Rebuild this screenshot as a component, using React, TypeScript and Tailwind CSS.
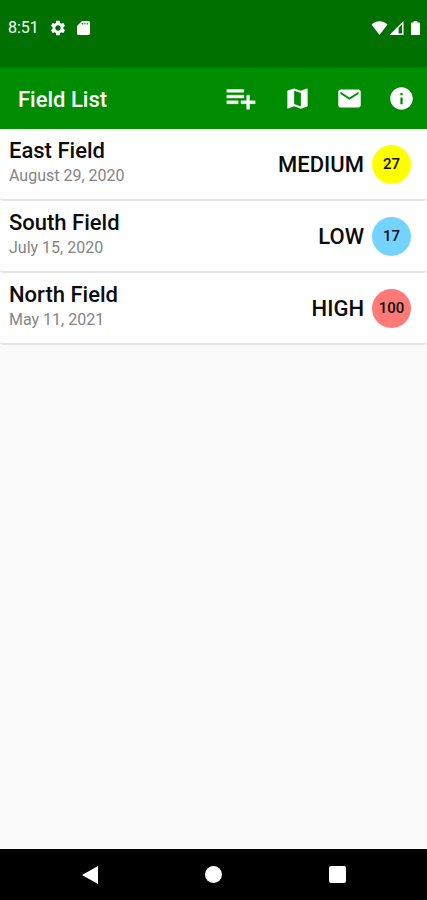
import type { ReactNode } from "react";
import { MdEmail, MdInfo, MdSettings } from "react-icons/md";

type Field = {
  name: string;
  date: string;
  risk: string;
  score: number;
  badge: string;
};

const fields: Field[] = [
  { name: "East Field", date: "August 29, 2020", risk: "MEDIUM", score: 27, badge: "bg-[#ffff00]" },
  { name: "South Field", date: "July 15, 2020", risk: "LOW", score: 17, badge: "bg-[#74d4ff]" },
  { name: "North Field", date: "May 11, 2021", risk: "HIGH", score: 100, badge: "bg-[#ff7a77]" },
];

function StatusBar() {
  return (
    <div className="flex h-17 items-start justify-between bg-[#007000] pt-4 pr-[7px] pl-2 text-white">
      <div className="flex h-6 items-center">
        <span className="w-[41px] text-base">8:51</span>
        <MdSettings className="mr-2.5 size-[18px]" />
        {/* SD card */}
        <svg viewBox="0 0 13 14" className="h-[14px] w-[13px]" fill="currentColor">
          <path
            fillRule="evenodd"
            d="M5 0H11.5Q13 0 13 1.5V12.5Q13 14 11.5 14H1.5Q0 14 0 12.5V5zM5 1.8V3.6H6V1.8zM7.4 1.8V3.6H8.4V1.8zM9.8 1.8V3.6H10.8V1.8z"
          />
        </svg>
      </div>
      <div className="flex h-6 items-center">
        {/* Wi-Fi */}
        <svg viewBox="0 0 17 14" className="mr-px h-[14px] w-[17px]" fill="currentColor">
          <path d="M0.5 3.6C5-1 12-1 16.5 3.6L8.5 14z" />
        </svg>
        {/* Signal */}
        <svg viewBox="0 0 15 14" className="mr-[7px] h-[14px] w-[15px]" fill="currentColor">
          <path fillRule="evenodd" d="M0.5 14L14.5 0V14zM9.6 6.8V12.5H13V3.4z" />
        </svg>
        {/* Battery */}
        <svg viewBox="0 0 9 14" className="h-[14px] w-[9px]" fill="currentColor">
          <path d="M2.7 0H6.3V1.4H8.2Q9 1.4 9 2.2V13.2Q9 14 8.2 14H0.8Q0 14 0 13.2V2.2Q0 1.4 0.8 1.4H2.7z" />
        </svg>
      </div>
    </div>
  );
}

function BarButton({ label, wide, children }: { label: string; wide?: boolean; children: ReactNode }) {
  return (
    <button
      type="button"
      aria-label={label}
      className={wide ? "flex h-15 w-15 items-center justify-center" : "flex h-15 w-13 items-center justify-center"}
    >
      {children}
    </button>
  );
}

function AppBar() {
  return (
    <header className="flex h-[61px] items-start justify-between bg-[#008c00] pl-[18px] text-white">
      <h1 className="pt-[18px] text-[22px] leading-7 font-medium">Field List</h1>
      <div className="flex">
        <BarButton label="Add field" wide>
          <svg
            viewBox="0 0 24 24"
            className="size-[34px]"
            fill="currentColor"
            stroke="currentColor"
            strokeWidth="0.3"
          >
            <path d="M14 10H2v2h12v-2zm0-4H2v2h12V6zm4 8v-4h-2v4h-4v2h4v4h2v-4h4v-2h-4zM2 16h8v-2H2v2z" />
          </svg>
        </BarButton>
        <BarButton label="Map">
          <svg viewBox="0 0 24 24" className="size-[27px]" fill="currentColor">
            <path d="M20.5 3l-.16.03L15 5.1 9 3 3.36 4.9c-.21.07-.36.25-.36.48V20.5c0 .28.22.5.5.5l.16-.03L9 18.9l6 2.1 5.64-1.9c.21-.07.36-.25.36-.48V3.5c0-.28-.22-.5-.5-.5zM15 19l-6-2.11V5l6 2.11V19z" />
          </svg>
        </BarButton>
        <BarButton label="Messages">
          <MdEmail className="size-[27px]" />
        </BarButton>
        <BarButton label="About">
          <MdInfo className="size-[27px]" />
        </BarButton>
      </div>
    </header>
  );
}

function FieldRow({ field }: { field: Field }) {
  return (
    <li className="flex h-18 items-start justify-between rounded-b-sm border-b-2 border-[#e4e4e4] bg-white pr-4 pl-[9px]">
      <div className="pt-2">
        <h2 className="text-[22px] leading-7 font-medium text-[#0c0c0c]">{field.name}</h2>
        <p className="text-base leading-[22px] text-[#858585]">{field.date}</p>
      </div>
      <div className="flex items-center gap-2 pt-4">
        <span className="text-[22px] leading-7 font-medium text-[#0c0c0c]">{field.risk}</span>
        <span
          className={`flex size-[39px] items-center justify-center rounded-full text-[15px] font-medium text-[#0c0c0c] ${field.badge}`}
        >
          {field.score}
        </span>
      </div>
    </li>
  );
}

function NavBar() {
  return (
    <nav className="grid h-[51px] grid-cols-3 bg-black px-7 text-white">
      <button type="button" aria-label="Back" className="flex items-center justify-center">
        <svg viewBox="0 0 18 18" className="size-[18px]" fill="currentColor">
          <path d="M1 9L17 0V18z" />
        </svg>
      </button>
      <button type="button" aria-label="Home" className="flex items-center justify-center">
        <span className="size-[17px] rounded-full bg-white" />
      </button>
      <button type="button" aria-label="Recent apps" className="flex items-center justify-center">
        <span className="size-[17px] rounded-xs bg-white" />
      </button>
    </nav>
  );
}

export default function App() {
  return (
    <div className="flex min-h-screen flex-col bg-[#fafafa] font-[Roboto,sans-serif]">
      <StatusBar />
      <AppBar />

      {/* Field list */}
      <main className="flex-1">
        <ul>
          {fields.map((field) => (
            <FieldRow key={field.name} field={field} />
          ))}
        </ul>
      </main>

      <NavBar />
    </div>
  );
}
